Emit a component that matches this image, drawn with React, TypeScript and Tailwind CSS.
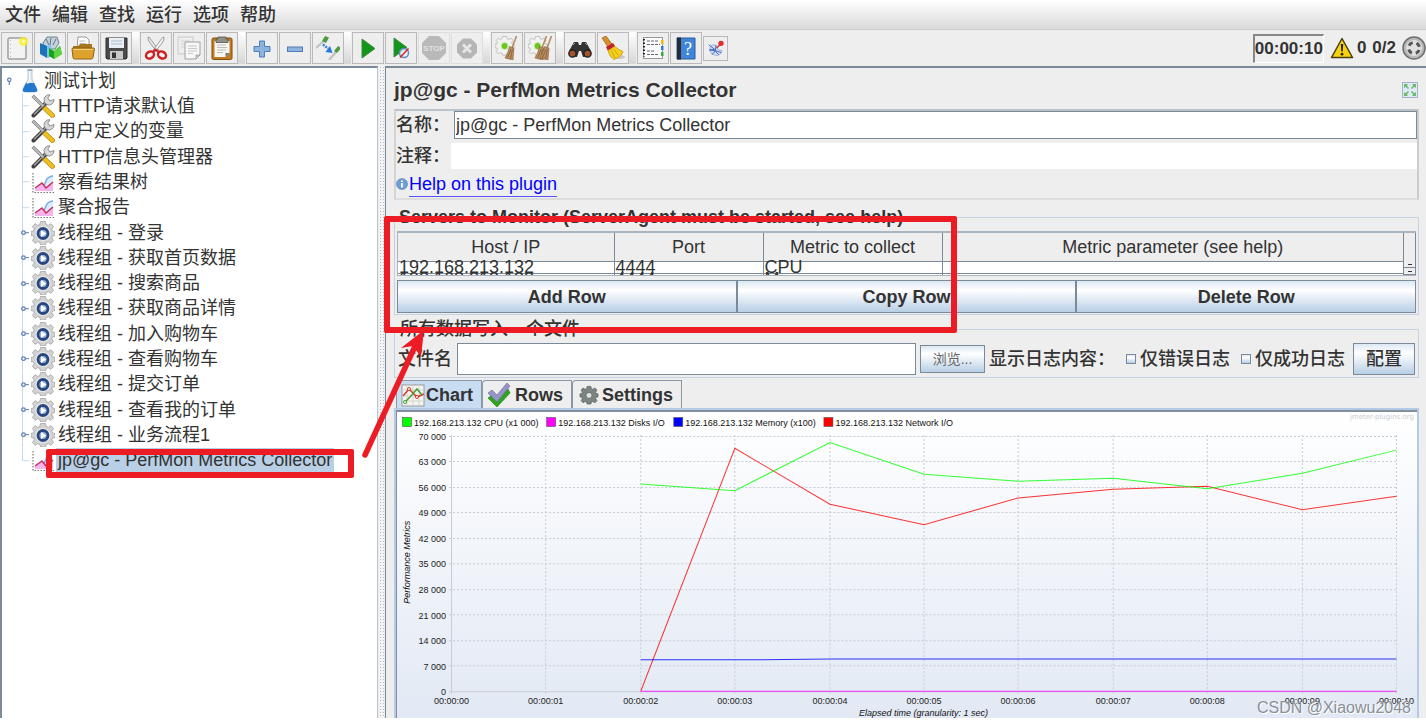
import type { ReactNode } from "react";
import { clsx } from "clsx";

const SANS = "font-['Liberation_Sans','Noto_Sans_CJK_SC',sans-serif]";
const METAL = "border border-[#7a8a99] bg-linear-to-b from-[#dde8f3] via-white via-30% to-[#b8cfe5]";

function Icon({ size, box = 24, children }: { size: string; box?: number; children: ReactNode }) {
  return (
    <svg viewBox={`0 0 ${box} ${box}`} className={clsx("shrink-0", size)} aria-hidden="true">
      {children}
    </svg>
  );
}

/* ---------- shared icon pieces ---------- */

const GEAR =
  "M9.500 .5h5l.7 3 2 .9L20 2.700 22.500 5.500 20.800 8.200l.7 1.800 2.500.5v4l-2.500.5-.7 1.800L22.500 19.500 20 22.300l-2.800-1.700-2 .9-.7 2.500h-5l-.7-2.500-2-.9L4 22.300 1.500 19.500l1.700-2.700-.7-1.800L0 14.500v-4L2.500 10l.7-1.800L1.500 5.500 4 2.700l2.800 1.700 2-.9z";

function Broom({ x }: { x: number }) {
  return (
    <g transform={`translate(${x} 0)`}>
      <path d="M15.500 0 11 12" stroke="#b08a5a" strokeWidth="1.500" />
      <path d="M8.500 10.500 13 12l-1 12-8-2q3-5 4.500-11.500z" fill="#b98f62" stroke="#8a6238" strokeWidth=".6" />
      <path d="M10 13 6.500 22M11.500 13l-2 10" stroke="#7d5730" strokeWidth=".7" />
    </g>
  );
}

function GearBroom({ twin }: { twin?: boolean }) {
  return (
    <>
      <path d={GEAR} transform="scale(.8)" fill="#f2f2f0" stroke="#b4b4b0" strokeWidth="1" />
      <circle cx="9.600" cy="10" r="3.600" fill="#6cc61c" stroke="#d9eec4" />
      {twin && <Broom x={3} />}
      <Broom x={twin ? 8 : 6} />
    </>
  );
}

/* ---------- toolbar ---------- */

type Tool = { label: string; icon: ReactNode; disabled?: boolean; small?: boolean };

const TOOL_GROUPS: Tool[][] = [
  [
    {
      label: "New",
      icon: (
        <>
          <rect x="3" y="2" width="18" height="21" rx="1" fill="#f3f3f3" stroke="#777" />
          <path d="M5.500 4v17" stroke="#bbb" strokeDasharray="1 3" />
          <circle cx="18.500" cy="5.500" r="5" fill="#f8ee3c" opacity=".6" />
          <circle cx="18.500" cy="5.500" r="3.200" fill="#fbf236" />
          <circle cx="18.500" cy="5.500" r="1.300" fill="#fff" />
        </>
      ),
    },
    {
      label: "Templates",
      icon: (
        <>
          <path d="M5 7 9 1h10l2 6-4 6H7z" fill="#c3d2da" stroke="#6c8290" />
          <path d="M8 3l3 6M13 2l-1 7M18 3l-3 6" stroke="#5d7686" />
          <path d="m2 7 7 3v12l-7-4z" fill="#1c74b8" />
          <path d="m9 10 4-1v12l-4 1z" fill="#79c4ea" />
          <path d="m11 12 5 3 6-5 2 8-8 5-5-3z" fill="#19a119" />
          <path d="m16 15 6-5 2 8-8 5z" fill="#5fd346" />
        </>
      ),
    },
    {
      label: "Open",
      icon: (
        <>
          <path d="M7 1h8l3 3v9H6z" fill="#fff" stroke="#999" />
          <path d="M8.500 5h6M8.500 7.500h7" stroke="#bbb" />
          <path d="M2 10h5l2-2h12v14H2z" fill="#a8761b" />
          <path d="M1 13q0-1 1-1h20.500q1 0 .9 1L22 21.500q-.2 1.500-1.500 1.500h-17Q2.300 23 2 21.500z" fill="#dfa12e" stroke="#8f6414" />
          <path d="M2.500 13.500h19.500" stroke="#f7d27e" />
        </>
      ),
    },
    {
      label: "Save",
      icon: (
        <>
          <path d="M2 2h21v20l-1 1H3l-1-1z" fill="#4a4a4a" stroke="#2f2f2f" />
          <path d="M5 2h15v10H5z" fill="#e9eff5" />
          <path d="M7 5h11M7 8h11" stroke="#a9bccd" />
          <path d="M6 15h13v8H6z" fill="#c9c9c9" />
          <path d="M8 16.500h4V22H8z" fill="#333" />
        </>
      ),
    },
  ],
  [
    {
      label: "Cut",
      icon: (
        <>
          <path d="M4 1q-.5 3 2 6l7 9 2-1.500L5.500 1.500z" fill="#e6e6e6" stroke="#888" strokeWidth=".8" />
          <path d="M20 1q.5 3-2 6l-7 9-2-1.500L18.500 1.500z" fill="#f4f4f4" stroke="#888" strokeWidth=".8" />
          <ellipse cx="6" cy="19" rx="4.200" ry="3.300" fill="none" stroke="#cc1f1f" strokeWidth="2.400" transform="rotate(-30 6 19)" />
          <ellipse cx="18" cy="19" rx="4.200" ry="3.300" fill="none" stroke="#cc1f1f" strokeWidth="2.400" transform="rotate(30 18 19)" />
          <path d="m8.500 16.500 3-3 4 3" stroke="#cc1f1f" strokeWidth="2" fill="none" />
        </>
      ),
    },
    {
      label: "Copy",
      icon: (
        <>
          <rect x="1" y="1" width="15" height="17" fill="#ededed" stroke="#c9c9c9" />
          <path d="M4 5h9M4 8h4M4 11h3" stroke="#d0d0d0" />
          <path d="M8 6h15v13l-4 4H8z" fill="#f7f7f7" stroke="#a0a0a0" />
          <path d="M11 10h9M11 12.500h9M11 15h9M11 17.500h5" stroke="#c8c8c8" />
          <path d="M23 19h-4v4z" fill="#cfcfcf" stroke="#8e8e8e" strokeWidth=".6" />
        </>
      ),
    },
    {
      label: "Paste",
      icon: (
        <>
          <rect x="2" y="2" width="20" height="21.500" rx="1.500" fill="#c07c1e" stroke="#7d4e0f" />
          <path d="M4.500 5h15v12l-4 4h-11z" fill="#f6f6f3" />
          <path d="M7 9h9M7 11.500h10M7 14h9M7 16.500h6" stroke="#bdbdbd" />
          <path d="M19.500 17h-4v4z" fill="#777" />
          <path d="M8 1h8v2h2v3.500H6V3h2z" fill="#8f9187" stroke="#56574f" strokeWidth=".8" />
        </>
      ),
    },
  ],
  [
    {
      label: "Expand all",
      icon: <path d="M9.500 5h5v5.500H20v5h-5.500V21h-5v-5.500H4v-5h5.500z" fill="#8db4de" stroke="#4d7db8" />,
    },
    {
      label: "Collapse all",
      icon: <rect x="4.500" y="11" width="15" height="4.500" fill="#8db4de" stroke="#4d7db8" />,
    },
    {
      label: "Toggle",
      icon: (
        <>
          <path d="M0 12 8 5" stroke="#bcc4bc" strokeWidth="2.200" />
          <path d="m6 5 3-5 4 1.500L10 7z" fill="#4f9a42" />
          <path d="M13 24l7-8" stroke="#bcc4bc" strokeWidth="2.200" />
          <path d="m18 15 4-5 3 2-4 5z" fill="#4f9a42" />
          <path d="m7 8.500 5 4" stroke="#2f7fe0" strokeWidth="2.500" strokeDasharray="2 1" />
          <path d="m16.500 17-7-1 4.500-6z" fill="#2376e5" />
        </>
      ),
    },
  ],
  [
    {
      label: "Start",
      icon: <path d="M6 3v19l13-9.500z" fill="#13951a" stroke="#3f8a3f" />,
    },
    {
      label: "Start no pauses",
      icon: (
        <>
          <path d="M5 2v19l13-9.500z" fill="#13951a" stroke="#3f8a3f" />
          <circle cx="15" cy="17" r="4.500" fill="#e4edf8" fillOpacity=".8" stroke="#5b8cc8" strokeWidth="1.500" />
          <path d="m11 21.500 8.500-9" stroke="#d22" strokeWidth="1.500" />
        </>
      ),
    },
    {
      label: "Stop",
      disabled: true,
      icon: (
        <>
          <path d="M7 0h10l7 7v10l-7 7H7l-7-7V7z" fill="#b9b9b9" />
          <text x="12" y="15" textAnchor="middle" fontSize="8" fontWeight="700" fill="#e2e2e2">
            STOP
          </text>
        </>
      ),
    },
    {
      label: "Shutdown",
      disabled: true,
      icon: (
        <>
          <path d="M8 2.500h8l6 6v8l-6 6H8l-6-6v-8z" fill="#b5b5b5" />
          <path d="m8 8.500 8 8m0-8-8 8" stroke="#e6e6e6" strokeWidth="3" />
        </>
      ),
    },
  ],
  [
    { label: "Clear", icon: <GearBroom /> },
    { label: "Clear all", icon: <GearBroom twin /> },
  ],
  [
    {
      label: "Search",
      icon: (
        <>
          <path d="M6 6h4l1 3h2l1-3h4l5 9-1 5-7 1-2-6h-2l-2 6-7-1-1-5z" fill="#333" />
          <path d="M5 9l2-2M17 7l2 2" stroke="#999" />
          <circle cx="4.500" cy="17.500" r="3.600" fill="#a5532b" stroke="#222" strokeWidth="1.500" />
          <circle cx="19.500" cy="17.500" r="3.600" fill="#a5532b" stroke="#222" strokeWidth="1.500" />
        </>
      ),
    },
    {
      label: "Reset search",
      icon: (
        <>
          <ellipse cx="17" cy="21" rx="7" ry="2" fill="#c8c8c8" />
          <path d="m1 2 4-2 6 8-4 3z" fill="#d98d2d" stroke="#9b5e14" strokeWidth=".7" />
          <path d="m5 11 7-4 2 3-7 5z" fill="#c01f2b" />
          <path d="m7 14.500 7-4q3 3 8 5-1 5-9 8-5-3-6-9z" fill="#f6cf1f" stroke="#c39a0b" strokeWidth=".8" />
          <path d="m10 14 4 8M12.500 13l5 6.500" stroke="#c39a0b" strokeWidth=".8" />
        </>
      ),
    },
  ],
  [
    {
      label: "Function helper",
      icon: (
        <>
          <rect x="2.500" y="1.500" width="19" height="21" fill="#fbfbfb" stroke="#999" />
          <path d="M3 3v18" stroke="#222" strokeWidth="2" strokeDasharray="1.500 2" />
          <path d="M6 5h12M6 8.500h13M6 15h8M6 18.500h11" stroke="#667" strokeDasharray="3 1" />
          <path d="M20 4h2.500v4H20z" fill="#f2b90c" />
          <path d="M20 10h2.500v4H20z" fill="#2f7de0" />
          <path d="M20 16h2.500v4H20z" fill="#3aa93a" />
        </>
      ),
    },
    {
      label: "Help",
      icon: (
        <>
          <path d="M3 2h18v21H3z" fill="#3f86d8" stroke="#2a5d9c" />
          <path d="M3 1.500h4v22H3z" fill="#2b2b33" />
          <text x="14" y="19" textAnchor="middle" fontSize="18" fill="#fff" className="font-['Liberation_Serif',serif]">
            ?
          </text>
        </>
      ),
    },
    {
      label: "Plugins Manager",
      small: true,
      icon: (
        <>
          <path d="M3 11q-1 10 8 12 8 1 10-7l-7-2-2-6q-7-2-9 3z" fill="#d3def5" stroke="#7d95cc" />
          <path d="m1 7 9 7-8 1 9 1-5 6M12 8l-1 8 9 3M10 16l6 6" stroke="#4a6cc0" fill="none" strokeWidth="1.500" />
          <path d="m13 12 5-5" stroke="#c33" strokeWidth="2" />
          <circle cx="19.500" cy="5" r="4" fill="#dc2f2f" />
        </>
      ),
    },
  ],
];

function ToolButton({ tool }: { tool: Tool }) {
  return (
    <button
      type="button"
      aria-label={tool.label}
      disabled={tool.disabled}
      className={clsx(
        "flex items-center justify-center border bg-[#eee]",
        tool.disabled ? "border-[#dedede]" : "border-[#b9b9b9]",
        tool.small ? "size-[25px]" : "h-8 w-8",
      )}
    >
      <Icon size={tool.small ? "size-4" : "size-6"}>{tool.icon}</Icon>
    </button>
  );
}

function Toolbar() {
  return (
    <div className="flex h-9 items-center bg-[#eee] pl-px">
      {TOOL_GROUPS.map((group, i) => (
        <div key={i} className="flex items-center">
          {i > 0 && <span className="mr-px h-8 w-[7px] bg-linear-to-b from-white to-[#d6d6d6]" />}
          <div className="flex items-center gap-px">
            {group.map((t) => (
              <ToolButton key={t.label} tool={t} />
            ))}
          </div>
        </div>
      ))}
      <div className="ml-auto flex items-center text-[17px] font-bold text-[#333]">
        <span className="border border-t-2 border-l-2 border-t-[#888] border-r-white border-b-white border-l-[#888] py-px leading-6">
          00:00:10
        </span>
        <span className="ml-1.5 flex items-center gap-[3px]">
          <Icon size="size-6">
            <path d="M12 2.500 22.500 21.500h-21z" fill="#f6d20f" stroke="#4a3d08" strokeWidth="1.500" strokeLinejoin="round" />
            <path d="M10.800 8h2.400l-.5 7.500h-1.400z" fill="#2b2405" />
            <circle cx="12" cy="18.200" r="1.400" fill="#2b2405" />
          </Icon>
          0
        </span>
        <span className="mr-1.5 ml-1.5">0/2</span>
        <Icon size="size-6">
          <circle cx="12" cy="12" r="11" fill="#b8b8b8" stroke="#6f6f6f" strokeWidth="1.500" />
          <circle cx="12" cy="12" r="8" fill="#e0e0e0" />
          <circle cx="12" cy="12" r="5.500" fill="none" stroke="#555" strokeWidth="3" strokeDasharray="4.600 4.040" strokeDashoffset="-2" />
        </Icon>
      </div>
    </div>
  );
}

/* ---------- test plan tree ---------- */

type NodeKind = "plan" | "config" | "report" | "group";

const NODE_ICON: Record<NodeKind, ReactNode> = {
  plan: (
    <>
      <path d="M10 1h4v9l5 10q1 3-2 3H7q-3 0-2-3l5-10z" fill="#dfeaf3" stroke="#aabdca" strokeWidth=".8" />
      <path d="m8 14-3 6q-1 3 2 3h10q3 0 2-3l-3-6z" fill="#2277cf" />
      <path d="M11.500 2v9l-2 4" stroke="#fff" fill="none" />
      <path d="M9.500 1h5" stroke="#8fa4b3" strokeWidth="1.500" />
    </>
  ),
  config: (
    <>
      <path d="m2.500 21.500 13-13" stroke="#3f3f3f" strokeWidth="4" strokeLinecap="round" />
      <path d="m3 20.500 12-12" stroke="#a8a8a8" strokeWidth="1.300" />
      <path d="M23 5.500a5.200 5.200 0 0 1-7 5.200l-2.500-2.500A5.200 5.200 0 0 1 19 .8l-2.200 3.200 2 3z" fill="#d8d8d8" stroke="#777" strokeWidth=".8" />
      <path d="M.8 3 3 1l10.500 10.500-2 2z" fill="#b5b5b5" stroke="#666" strokeWidth=".6" />
      <path d="m11.500 15 3-3 9 8.500q.5 2-1 2.800-1.200.7-2 .2z" fill="#f0bf1d" stroke="#a77d08" strokeWidth=".8" />
    </>
  ),
  report: (
    <>
      <path d="M2 3v19.500h21" stroke="#777" strokeWidth="1.200" strokeDasharray="1.500 1.500" fill="none" />
      <path d="M13 16q0-9 9-11v11z" fill="#dcecfd" />
      <path d="M13 16q1-3 2-5 1-4 7-5" stroke="#79a9e6" strokeWidth="1.500" fill="none" />
      <path d="M4 21v-3l7-5 4 4 7-5v9z" fill="#f5b4ea" />
      <path d="m4 18 7-5 4 5 7-6" stroke="#c62a5c" strokeWidth="1.400" fill="none" />
    </>
  ),
  group: (
    <>
      <path d={GEAR} fill="#d2d2d2" stroke="#a3a3a3" strokeWidth=".8" />
      <circle cx="12" cy="12.500" r="7.500" fill="#ececec" />
      <circle cx="12" cy="12.500" r="5" fill="#9db4d8" stroke="#27477e" strokeWidth="2.800" />
      <path d="M10 9v7l5.300-3.500z" fill="#fff" />
    </>
  ),
};

const TREE: { kind: NodeKind; label: string; selected?: boolean }[] = [
  { kind: "config", label: "HTTP请求默认值" },
  { kind: "config", label: "用户定义的变量" },
  { kind: "config", label: "HTTP信息头管理器" },
  { kind: "report", label: "察看结果树" },
  { kind: "report", label: "聚合报告" },
  { kind: "group", label: "线程组 - 登录" },
  { kind: "group", label: "线程组 - 获取首页数据" },
  { kind: "group", label: "线程组 - 搜索商品" },
  { kind: "group", label: "线程组 - 获取商品详情" },
  { kind: "group", label: "线程组 - 加入购物车" },
  { kind: "group", label: "线程组 - 查看购物车" },
  { kind: "group", label: "线程组 - 提交订单" },
  { kind: "group", label: "线程组 - 查看我的订单" },
  { kind: "group", label: "线程组 - 业务流程1" },
  { kind: "report", label: "jp@gc - PerfMon Metrics Collector", selected: true },
];

function TreePanel() {
  return (
    <nav className="w-[378px] shrink-0 border-t-2 border-r border-l-2 border-[#7a8a99] border-r-[#b8c4d0] bg-white">
      <ul className="grid h-[405px] auto-rows-fr text-lg leading-6 text-[#333]">
        <li className="flex items-center pl-0.5">
          <Icon size="h-2 w-3.5" box={14}>
            <circle cx="4" cy="5" r="3" fill="none" stroke="#5b7db8" strokeWidth="2" />
            <path d="M4 8v6" stroke="#5b7db8" strokeWidth="2" />
          </Icon>
          <Icon size="size-6">{NODE_ICON.plan}</Icon>
          <span className="ml-0.5">测试计划</span>
        </li>
        {TREE.map((n, i) => (
          <li key={n.label} className="flex items-center pl-[18px]">
            <svg viewBox="0 0 10 26" preserveAspectRatio="none" className="h-full w-2.5 shrink-0" aria-hidden="true">
              <path d={i === TREE.length - 1 ? "M2.500 0v13" : "M2.500 0v26"} stroke="#c5d9ec" />
              <path d="M2.500 13H9" stroke={n.kind === "group" ? "#5b7db8" : "#c5d9ec"} />
              {n.kind === "group" && <circle cx="3.500" cy="13" r="1.800" fill="#fff" stroke="#5b7db8" strokeWidth="1.300" />}
            </svg>
            <Icon size="ml-px size-6">{NODE_ICON[n.kind]}</Icon>
            <span className={clsx("ml-px whitespace-nowrap px-0.5", n.selected && "bg-[#b8cfe5]")}>{n.label}</span>
          </li>
        ))}
      </ul>
    </nav>
  );
}

/* ---------- metrics chart ---------- */

const COLORS = { cpu: "#00ff00", disks: "#ff00ff", memory: "#0000ff", network: "#ff0000" };

const LEGEND = [
  { color: COLORS.cpu, label: "192.168.213.132 CPU (x1 000)", x: 5 },
  { color: COLORS.disks, label: "192.168.213.132 Disks I/O", x: 149 },
  { color: COLORS.memory, label: "192.168.213.132 Memory (x100)", x: 276 },
  { color: COLORS.network, label: "192.168.213.132 Network I/O", x: 426 },
];

// samples start at second 2
const SERIES = [
  { color: COLORS.network, values: [0, 66500, 51200, 45600, 52900, 55300, 56100, 49700, 53400] },
  { color: COLORS.cpu, values: [56700, 54900, 68100, 59400, 57500, 58300, 55400, 59700, 66000] },
  { color: COLORS.memory, values: [8600, 8600, 8800, 8800, 8800, 8800, 8800, 8800, 8800] },
  { color: COLORS.disks, values: [0, 0, 0, 0, 0, 0, 0, 0, 0] },
];

const px = (sec: number) => Math.round(54 + sec * 94.4) + 0.5;
const py = (v: number) => 279 - (v * 255.5) / 70000;

function formatTick(v: number) {
  return v === 0 ? "0" : `${v / 1000} 000`;
}

function MetricsChart() {
  const seconds = Array.from({ length: 11 }, (_, i) => i);
  const ticks = Array.from({ length: 11 }, (_, i) => i * 7000);
  return (
    <svg viewBox="0 0 1019 306" className="block w-full" role="img" aria-label="Performance Metrics">
      <defs>
        <linearGradient id="plot" x1="0" y1="0" x2="0" y2="1">
          <stop offset="0" stopColor="#fff" />
          <stop offset="1" stopColor="#e2e9f4" />
        </linearGradient>
      </defs>
      <rect width="1019" height="306" fill="url(#plot)" />

      {LEGEND.map((l) => (
        <g key={l.label}>
          <rect x={l.x + 0.5} y="5.500" width="9" height="9" fill={l.color} stroke="#555" strokeWidth=".6" />
          <text x={l.x + 12} y="14" fontSize="9" fill="#111">{l.label}</text>
        </g>
      ))}
      <text x="1016" y="7" textAnchor="end" fontSize="7" fill="#c9ccd2" className="font-['DejaVu_Sans',sans-serif]">
        jmeter-plugins.org
      </text>

      {ticks.map((v) => (
        <g key={v}>
          <path d={`M52 ${Math.round(py(v)) + 0.5}H999`} stroke="#c6cbd6" strokeDasharray={v ? "2 2" : undefined} />
          <text x="49" y={py(v) + 4} textAnchor="end" fontSize="9" fill="#222">{formatTick(v)}</text>
        </g>
      ))}
      {seconds.map((s) => (
        <g key={s}>
          <path d={`M${px(s)} 23V282`} stroke="#c6cbd6" strokeDasharray={s ? "2 2" : undefined} />
          <text x={px(s)} y="292" textAnchor="middle" fontSize="9" fill="#222">
            {`00:00:${String(s).padStart(2, "0")}`}
          </text>
        </g>
      ))}

      {SERIES.map((s) => (
        <polyline
          key={s.color}
          points={s.values.map((v, i) => `${px(i + 2)},${py(v)}`).join(" ")}
          fill="none"
          stroke={s.color}
          strokeOpacity=".8"
          strokeWidth="1"
        />
      ))}

      <text x="13" y="150" transform="rotate(-90 13 150)" textAnchor="middle" fontSize="9" fontStyle="italic" fill="#111">
        Performance Metrics
      </text>
      <text x="526" y="304" textAnchor="middle" fontSize="9" fontStyle="italic" fill="#111">
        Elapsed time (granularity: 1 sec)
      </text>
    </svg>
  );
}

/* ---------- collector panel ---------- */

const ROWS = [
  ["192.168.213.132", "4444", "CPU", ""],
  ["192.168.213.132", "4444", "Memory", ""],
];

function ServersGroup() {
  return (
    <fieldset className="mt-[5px] mr-[7px] border border-[#c3d3e3] px-0.5 pb-px">
      <legend className="ml-0.5 text-lg leading-6 font-bold">Servers to Monitor (ServerAgent must be started, see help)</legend>
      <div className="mt-0.5 flex h-[45px] overflow-hidden border-t-2 border-b border-l border-[#a9b4bf]">
        <table className="w-full table-fixed self-start border-collapse bg-white text-lg">
          <colgroup>
            <col className="w-[216px]" />
            <col className="w-[149px]" />
            <col className="w-[179px]" />
            <col />
          </colgroup>
          <thead className="bg-[#eee]">
            <tr>
              {["Host / IP", "Port", "Metric to collect", "Metric parameter (see help)"].map((h) => (
                <th key={h} className="h-7 border-r border-b border-[#7a8a99] p-0 font-normal leading-6">{h}</th>
              ))}
            </tr>
          </thead>
          <tbody>
            {ROWS.map((r) => (
              <tr key={r[2]}>
                {r.map((c, i) => (
                  <td key={i} className="h-3 border-r border-b border-[#7a8a99] px-px py-0 leading-[10px]">{c}</td>
                ))}
              </tr>
            ))}
          </tbody>
        </table>
        <div className="flex w-3 shrink-0 flex-col border-r border-[#7a8a99]">
          <span className="h-7 shrink-0" />
          {["up", "down"].map((dir) => (
            <button key={dir} type="button" aria-label={`Scroll ${dir}`} className="flex h-[7px] shrink-0 items-center justify-center border-b border-[#7a8a99]">
              <span className="h-px w-1 bg-[#333]" />
            </button>
          ))}
        </div>
      </div>
      <div className="mt-1 grid grid-cols-3">
        {["Add Row", "Copy Row", "Delete Row"].map((b) => (
          <button key={b} type="button" className={clsx(METAL, "h-[33px] text-lg leading-6 font-bold")}>{b}</button>
        ))}
      </div>
    </fieldset>
  );
}

function FileGroup() {
  const box = clsx(METAL, "mr-1 size-2.5 appearance-none");
  return (
    <fieldset className="mt-0.5 mr-[7px] border border-[#c3d3e3] px-[3px] pb-0.5">
      <legend className="ml-0.5 text-lg leading-6 font-medium">所有数据写入一个文件</legend>
      <div className="mt-0.5 flex items-center text-lg font-medium whitespace-nowrap">
        <label htmlFor="filename">文件名</label>
        <input id="filename" className="ml-[5px] h-8 min-w-0 flex-1 border border-[#7a8a99] bg-white" />
        <button type="button" className={clsx(METAL, "mx-1 h-7 w-[65px] text-sm font-normal text-[#666]")}>浏览...</button>
        <span>显示日志内容：</span>
        <label className="ml-[11px] flex items-center"><input type="checkbox" className={box} />仅错误日志</label>
        <label className="ml-[11px] flex items-center"><input type="checkbox" className={box} />仅成功日志</label>
        <button type="button" className={clsx(METAL, "ml-2 h-8 w-[62px]")}>配置</button>
      </div>
    </fieldset>
  );
}

function Tabs() {
  const tabs = [
    {
      label: "Chart",
      icon: (
        <>
          <rect x="1" y="2" width="22" height="21" fill="#f4f4f0" stroke="#999" />
          <path d="M6 2v21M12 2v21M18 2v21M1 7h22M1 13h22M1 18h22" stroke="#d4d4d0" />
          <path d="m2 13 6-7 8 8 7-3" stroke="#d43a2a" strokeWidth="1.500" fill="none" />
          <path d="m4 19 5-5 7-8 5 6" stroke="#48a02f" strokeWidth="1.500" fill="none" />
          <circle cx="8" cy="6" r="1.500" fill="#fff" stroke="#d43a2a" />
          <circle cx="16" cy="14" r="1.500" fill="#fff" stroke="#d43a2a" />
          <circle cx="4" cy="19" r="1.500" fill="#fff" stroke="#48a02f" />
        </>
      ),
    },
    {
      label: "Rows",
      icon: (
        <>
          <path d="m1 15 4-3 5 5L21 6l2 4-13 14z" fill="#2da81c" stroke="#1a7a10" strokeWidth=".6" />
          <path d="m1 10 4-3 5 5L20 0l3 3-13 16z" fill="#9694c8" stroke="#66649c" strokeWidth=".6" />
        </>
      ),
    },
    {
      label: "Settings",
      icon: (
        <g transform="translate(3 3) scale(.75)">
          <path d={GEAR} fill="#7d8582" stroke="#59605d" />
          <circle cx="12" cy="12.500" r="4" fill="#dfe2e0" stroke="#59605d" />
        </g>
      ),
    },
  ];
  return (
    <div role="tablist" className="flex pl-0.5">
      {tabs.map((t, i) => (
        <button
          key={t.label}
          type="button"
          role="tab"
          aria-selected={i === 0}
          className={clsx(
            "flex h-7 items-center rounded-tl border border-b-0 border-[#8a98a6] pr-2 pl-1 text-lg leading-6 font-bold",
            i === 0 ? "bg-[#c8ddf2]" : "bg-[#eee]",
            i === 1 ? "gap-1" : "gap-px",
          )}
        >
          <Icon size="size-6">{t.icon}</Icon>
          {t.label}
        </button>
      ))}
    </div>
  );
}

function CollectorPanel() {
  return (
    <main className="min-w-0 flex-1 border-t-2 border-l border-[#7a8a99] bg-[#eee] pl-2 text-[#333]">
      <div className="flex h-[41px] items-center justify-between pt-0.5 pr-2">
        <h1 className="text-[21px] leading-7 font-bold">jp@gc - PerfMon Metrics Collector</h1>
        <button type="button" aria-label="Expand" className="size-4 border border-[#a5b3c4] bg-[#dfeaf6]">
          <Icon size="size-3.5" box={14}>
            <path d="M1 1h4L3.800 2.600 6 5 5 6 2.600 3.800 1 5zM13 1v4l-1.600-1.200L9 6 8 5l2.400-2.400L9 1zM1 13V9l1.600 1.200L5 8l1 1-2.200 2.400L5 13zM13 13H9l1.200-1.600L8 9l1-1 2.400 2.200L13 9z" fill="#6cba6c" />
          </Icon>
        </button>
      </div>

      <div className="mr-[7px] border-2 border-t-[#bcc2c8] border-r-[#ccc] border-b-[#ddd] border-l-[#d4d4d4] text-lg">
        <div className="flex h-7 items-center">
          <label htmlFor="name" className="w-[58px] shrink-0 font-medium">名称：</label>
          <input id="name" defaultValue="jp@gc - PerfMon Metrics Collector" className="h-7 min-w-0 flex-1 border border-[#7a8a99] bg-white pl-px" />
        </div>
        <div className="mt-[3px] flex h-7 items-center">
          <label htmlFor="comment" className="w-[55px] shrink-0 font-medium">注释：</label>
          <input id="comment" className="h-[26px] min-w-0 flex-1 bg-white" />
        </div>
        <div className="flex h-7 items-center gap-px">
          <Icon size="size-3">
            <circle cx="12" cy="12" r="11" fill="#6f9fd2" stroke="#4470a3" />
            <path d="M12 10v9M12 5v3" stroke="#fff" strokeWidth="3.500" />
          </Icon>
          <a href="#help" className="border-b border-[#5555f5] leading-6 text-[#0000ff]">Help on this plugin</a>
        </div>
      </div>

      <ServersGroup />
      <FileGroup />

      <div className="mt-0.5 mr-[7px]">
        <Tabs />
        <div className="border-x-2 border-t-2 border-[#b3cbe4]">
          <div className="border-t-2 border-l border-[#848f9b]">
            <MetricsChart />
          </div>
        </div>
      </div>
    </main>
  );
}

/* Red marks drawn over the window: a frame for each area and the arrow joining them. */
function Annotations() {
  return (
    <div className="pointer-events-none absolute inset-0">
      <div className="absolute top-[216px] left-[384px] h-[117px] w-[573px] rounded-xs border-6 border-[#ed1c24]" />
      <div className="absolute top-[449px] left-[46px] h-[29px] w-[308px] rounded-xs border-6 border-[#ed1c24]" />
      <svg viewBox="0 0 70 130" className="absolute top-[330px] left-[360px] h-[130px] w-[70px]" aria-hidden="true">
        <path d="M5 125 56 14" stroke="#ed1c24" strokeWidth="5.500" strokeLinecap="round" />
        <path d="M64 0 41 18l12-2 8 11z" fill="#ed1c24" />
      </svg>
    </div>
  );
}

export default function App() {
  return (
    <div className={clsx("relative overflow-hidden bg-white", SANS)}>
      <div className="flex h-[30px] items-center gap-[11px] border-b border-[#ccc] bg-linear-to-b from-white to-[#dadada] pl-[5px] text-lg font-medium text-[#333]">
        {["文件", "编辑", "查找", "运行", "选项", "帮助"].map((m) => (
          <button key={m} type="button">{m}</button>
        ))}
      </div>
      <Toolbar />
      <div className="flex">
        <TreePanel />
        <div className="w-[7px] shrink-0 border-x border-[#eee] bg-[radial-gradient(#b4bac2_1px,#f4f4f4_1px)] bg-size-[3px_3px]" />
        <CollectorPanel />
      </div>
      <Annotations />
      <span className="absolute right-[15px] bottom-0 text-base leading-5 text-[#8b8f96] [text-shadow:1px_1px_0_#fff]">CSDN @Xiaowu2048</span>
    </div>
  );
}
